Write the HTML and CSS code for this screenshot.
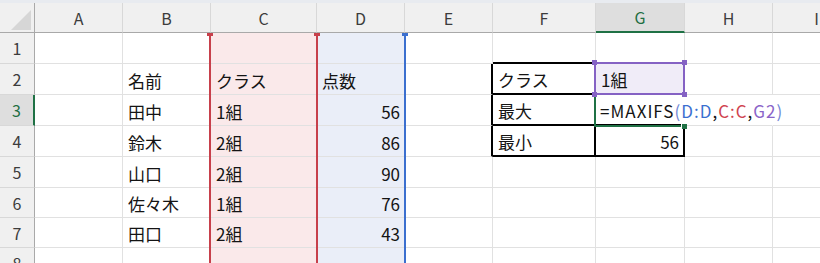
FILE: index.html
```html
<!DOCTYPE html>
<html lang="ja">
<head>
    <meta charset="UTF-8">
    <meta name="viewport" content="width=device-width, initial-scale=1.0">
    <title>MAXIFS</title>
    <link rel="stylesheet" href="styles.css">
</head>
<body>

<div class="sheet">
    <div class="topbar"></div>
    <div class="grid" id="grid"></div>

    <!-- reference highlights drawn over the cells -->
    <div class="range range-d"></div>
    <div class="range range-c"></div>
    <div class="active-cell"><i class="fill"></i></div>
    <div class="pick pick-g2"><i class="h tl"></i><i class="h tr"></i><i class="h bl"></i><i class="h br"></i></div>
</div>

<script>
    const cols = ['A', 'B', 'C', 'D', 'E', 'F', 'G', 'H', 'I'];
    const rowCount = 8;

    const data = {
        B2: '名前', C2: 'クラス', D2: '点数',
        B3: '田中', C3: '1組', D3: '56',
        B4: '鈴木', C4: '2組', D4: '86',
        B5: '山口', C5: '2組', D5: '90',
        B6: '佐々木', C6: '1組', D6: '76',
        B7: '田口', C7: '2組', D7: '43',
        F2: 'クラス', G2: '1組',
        F3: '最大',
        F4: '最小', G4: '56'
    };

    // formula being typed in G3
    const formula = '<span class="caret"></span>=MAXIFS<span class="paren">(</span>' +
        '<span class="t-d">D:D</span>,<span class="t-c">C:C</span>,' +
        '<span class="t-g">G2</span><span class="paren">)</span>';

    const grid = document.getElementById('grid');

    function addCell(cls, html) {
        let cell = document.createElement('div');
        cell.className = 'cell ' + cls;
        cell.innerHTML = html || '';
        grid.appendChild(cell);
        return cell;
    }

    // header row
    addCell('corner', '<svg width="34" height="29" viewBox="0 0 34 29"><polygon points="31,7 31,27 11,27" fill="#d6d6d6"/></svg>');
    cols.forEach(c => {
        addCell('col-head' + (c === 'G' ? ' sel' : ''), c);
    });

    // body rows
    for (let r = 1; r <= rowCount; r++) {
        addCell('row-head' + (r === 3 ? ' sel' : ''), r);
        cols.forEach(c => {
            let id = c + r;
            let cls = [];
            if (c === 'C') cls.push('ref-c');
            if (c === 'D') cls.push('ref-d');
            if (id === 'G2') cls.push('ref-g');
            if ((c === 'F' || c === 'G') && r >= 2 && r <= 4) cls.push('boxed');
            if (c === 'E' && r >= 2 && r <= 4) cls.push('box-left');
            if ((c === 'F' || c === 'G') && r === 1) cls.push('box-top');
            if (id === 'G3') cls.push('editing');
            if (id === 'H3') cls.push('spill');
            let text = data[id] || '';
            if (/^\d+$/.test(text)) cls.push('num');
            addCell(cls.join(' '), id === 'G3' ? formula : text);
        });
    }
</script>

</body>
</html>
```

FILE: styles.css
```css
body {
    margin: 0;
    background-color: #fff;
    font-family: "Noto Sans CJK JP", "Noto Sans", sans-serif;
}
.sheet {
    position: relative;
    width: 820px;
    height: 263px;
    overflow: hidden;
}
.topbar {
    height: 3px;
    background-color: #e8ebf0;
}
.grid {
    display: grid;
    grid-template-columns: 35px 88px 88px 106px 88px 88px 103px 89px 88px 88px;
    grid-template-rows: 30px repeat(5, 31px) 30px 30px 30px;
}
.cell {
    box-sizing: border-box;
    display: flex;
    align-items: center;
    padding: 2px 4px 0 5px;
    border-right: 1px solid #e1e1e1;
    border-bottom: 1px solid #e1e1e1;
    font-size: 17px;
    color: #141414;
    white-space: nowrap;
}
.num {
    justify-content: flex-end;
}
.corner {
    padding: 0;
    background-color: #f0f0f0;
    border-right: 1px solid #a9a9a9;
    border-bottom: 1px solid #a9a9a9;
}
.col-head {
    justify-content: center;
    padding: 0;
    background-color: #f0f0f0;
    border-right-color: #d8d8d8;
    border-bottom: 1px solid #a9a9a9;
    font-size: 16px;
    color: #3c3c3c;
}
.col-head.sel {
    background-color: #dedede;
    border-bottom: 2px solid #1f7145;
    color: #1f6e43;
}
.row-head {
    justify-content: center;
    padding: 0;
    background-color: #f0f0f0;
    border-right: 1px solid #a9a9a9;
    border-bottom-color: #d8d8d8;
    font-size: 16px;
    color: #3c3c3c;
}
.row-head.sel {
    background-color: #dedede;
    border-right: 2px solid #1f7145;
    color: #1f6e43;
}
.ref-c {
    background-color: #fae9ea;
}
.ref-d {
    background-color: #eaeef8;
}
.ref-g {
    background-color: #f0ecf8;
}
.boxed {
    border-right: 2px solid #000;
    border-bottom: 2px solid #000;
}
.box-left {
    border-right: 2px solid #000;
}
.box-top {
    border-bottom: 2px solid #000;
}
.editing {
    padding-left: 3px;
    letter-spacing: 1px;
    border-right-color: transparent;
}
.spill {
    border-right-color: transparent;
}

/* formula text */
.caret {
    display: inline-block;
    width: 1px;
    height: 19px;
    margin-right: 1px;
    background-color: #000;
}
.paren {
    color: #6f86d6;
}
.t-d {
    color: #3a6fd0;
}
.t-c {
    color: #d0434f;
}
.t-g {
    color: #8a63c8;
}

/* highlighted references */
.range {
    position: absolute;
    top: 33px;
    bottom: 0;
    border-left: 2px solid;
    border-right: 2px solid;
    pointer-events: none;
}
.range::before,
.range::after {
    content: '';
    position: absolute;
    top: 0;
    width: 6px;
    height: 3px;
}
.range::before {
    left: -4px;
}
.range::after {
    right: -4px;
}
.range-c {
    left: 209px;
    width: 105px;
    border-color: #c7404b;
}
.range-d {
    left: 316px;
    width: 86px;
    border-color: #3b6fcf;
}
.range-c::before,
.range-c::after {
    background-color: #c7404b;
}
.range-d::before,
.range-d::after {
    background-color: #3b6fcf;
}
.pick {
    position: absolute;
    left: 594px;
    top: 62px;
    width: 87px;
    height: 29px;
    border: 2px solid #8562c4;
    pointer-events: none;
}
.h {
    position: absolute;
    width: 5px;
    height: 5px;
    background-color: #8562c4;
}
.tl { left: -4px; top: -4px; }
.tr { right: -4px; top: -4px; }
.bl { left: -4px; bottom: -4px; }
.br { right: -4px; bottom: -4px; }
.active-cell {
    position: absolute;
    left: 594px;
    top: 93px;
    width: 89px;
    height: 30px;
    border: 2px solid #1f7145;
    border-right: none;
    pointer-events: none;
}
.fill {
    position: absolute;
    right: -2px;
    bottom: -4px;
    width: 5px;
    height: 5px;
    background-color: #1f7145;
    border-left: 1px solid #fff;
    border-top: 1px solid #fff;
}
```
